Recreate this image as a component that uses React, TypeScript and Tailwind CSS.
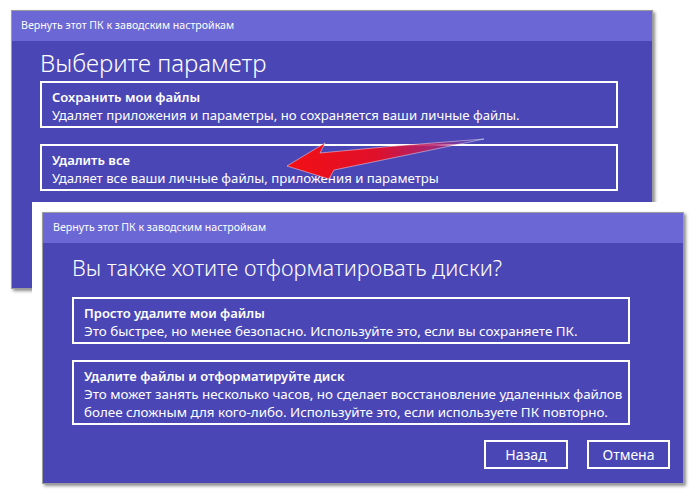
import React from "react";

const font = { fontFamily: '"Segoe UI", "Noto Sans", "Open Sans", sans-serif' };

function Option({ title, lines, size }: { title: string; lines: string[]; size: "a" | "b" }) {
  const t = size === "a" ? "text-[13.2px]" : "text-[13.4px]";
  return (
    <div className="border-2 border-white pl-[10px] pr-2 pt-[5px] pb-[2px]">
      <div className="whitespace-nowrap text-[13px] font-semibold leading-[18px] text-white">{title}</div>
      {lines.map((l) => (
        <div key={l} className={"whitespace-nowrap leading-[18px] text-white " + t}>
          {l}
        </div>
      ))}
    </div>
  );
}

export default function App() {
  return (
    <div className="relative h-[497px] w-[700px] overflow-hidden bg-white" style={font}>
      {/* Window 1 */}
      <div className="absolute left-[11px] top-[10px] flex h-[279px] w-[642px] flex-col border border-[#9c9c9c] shadow-[2px_2px_3px_rgba(0,0,0,0.45)]">
        <div className="flex h-[30px] items-center bg-[#6b67d4] pl-[9px] text-[10.6px] text-white">
          Вернуть этот ПК к заводским настройкам
        </div>
        <div className="flex flex-1 flex-col bg-[#4a46b6] pl-[28px] pt-[6px]">
          <div className="text-[24px] font-light leading-[32px] text-white">Выберите параметр</div>
          <div className="mt-[2px] flex w-[578px] flex-col gap-[16px]">
            <Option size="a" title="Сохранить мои файлы" lines={["Удаляет приложения и параметры, но сохраняется ваши личные файлы."]} />
            <Option size="a" title="Удалить все" lines={["Удаляет все ваши личные файлы, приложения и параметры"]} />
          </div>
        </div>
      </div>

      {/* Arrow */}
      <svg className="absolute left-0 top-0" width="700" height="497" viewBox="0 0 700 497">
        <defs>
          <linearGradient id="ag" x1="288" y1="0" x2="484" y2="0" gradientUnits="userSpaceOnUse">
            <stop offset="0" stopColor="#f20f14" />
            <stop offset="0.45" stopColor="#e0102a" />
            <stop offset="0.75" stopColor="#b5206a" stopOpacity="0.85" />
            <stop offset="1" stopColor="#8a3cb0" stopOpacity="0" />
          </linearGradient>
        </defs>
        <path
          d="M287 166 L325 143 L320 153 Q400 145 484 139 Q412 154 334 170 L329 179 Z"
          fill="url(#ag)"
          stroke="#ffffff"
          strokeOpacity="0.55"
          strokeWidth="0.8"
        />
      </svg>

      {/* White frame behind window 2 */}
      <div className="absolute left-[32px] top-[202px] h-[300px] w-[670px] bg-white" />

      {/* Window 2 */}
      <div className="absolute left-[42px] top-[212px] flex h-[272px] w-[642px] flex-col border border-[#9c9c9c] shadow-[2px_2px_3px_rgba(0,0,0,0.45)]">
        <div className="flex h-[30px] items-center bg-[#6b67d4] pl-[10px] text-[10.6px] text-white">
          Вернуть этот ПК к заводским настройкам
        </div>
        <div className="flex flex-1 flex-col bg-[#4a46b6] pl-[29px] pt-[9px]">
          <div className="text-[21.8px] font-light leading-[32px] text-white">Вы также хотите отформатировать диски?</div>
          <div className="mt-[13px] flex w-[558px] flex-col gap-[16px]">
            <Option size="b" title="Просто удалите мои файлы" lines={["Это быстрее, но менее безопасно. Используйте это, если вы сохраняете ПК."]} />
            <Option
              size="b"
              title="Удалите файлы и отформатируйте диск"
              lines={[
                "Это может занять несколько часов, но сделает восстановление удаленных файлов",
                "более сложным для кого-либо. Используйте это, если используете ПК повторно.",
              ]}
            />
          </div>
          <div className="mt-[15px] flex justify-end gap-[19px] pr-[13px]">
            <button className="flex h-[29px] w-[84px] items-center justify-center border-2 border-white text-[14px] text-white">
              Назад
            </button>
            <button className="flex h-[29px] w-[83px] items-center justify-center border-2 border-white text-[14px] text-white">
              Отмена
            </button>
          </div>
        </div>
      </div>
    </div>
  );
}
